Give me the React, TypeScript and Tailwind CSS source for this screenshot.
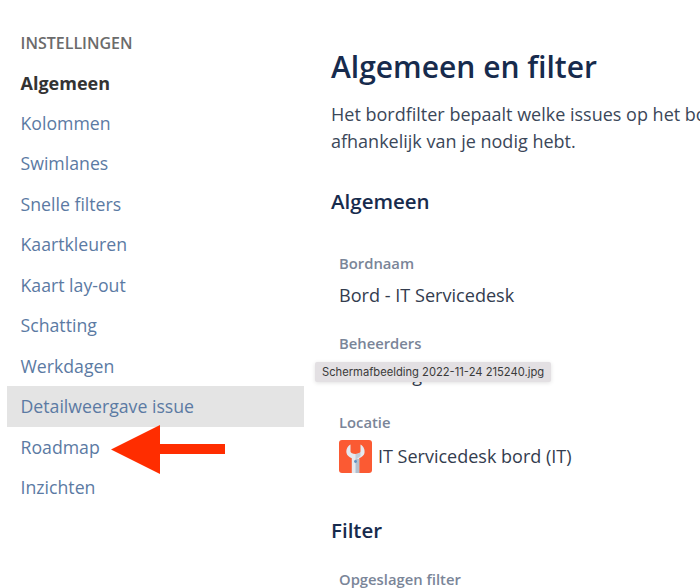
const navItems = [
  "Kolommen",
  "Swimlanes",
  "Snelle filters",
  "Kaartkleuren",
  "Kaart lay-out",
  "Schatting",
  "Werkdagen",
  "Detailweergave issue",
  "Roadmap",
  "Inzichten",
];

const WrenchIcon = () => (
  <svg viewBox="0 0 33 33" className="h-[33px] w-[33px] shrink-0">
    <rect width="33" height="33" rx="3" fill="#fb5a33" />
    <path
      d="M11.5 4.5 C8 6.5 7 10 7.5 13 C8 15.5 10 17 12.8 18.2 V33 H20.2 V18.2 C23 17 25 15.5 25.5 13 C26 10 25 6.5 21.5 4.5 V11.5 C21.5 13 19 14 16.5 14 C14 14 11.5 13 11.5 11.5 Z"
      fill="#e6e9ef"
    />
    <path d="M16.5 14 C19 14 21.5 13 21.5 11.5 V16 L16.5 20 Z" fill="#c3ccd8" />
    <path d="M16.5 19 H20.2 V33 H16.5 Z" fill="#b4c0cf" />
    <circle cx="16.5" cy="21.5" r="1.4" fill="#5d8fc2" />
  </svg>
);

const Field = ({ label, children }: { label: string; children: React.ReactNode }) => (
  <div className="pl-2">
    <div className="text-[14.8px] leading-[22px] font-semibold text-[#7a8598]">{label}</div>
    <div className="mt-[8px] text-[18.1px] leading-[26px] text-[#333c4e]">{children}</div>
  </div>
);

export default function App() {
  return (
    <div className="relative flex h-[588px] w-[700px] overflow-hidden bg-white font-['Open_Sans','Noto_Sans',sans-serif]">
      <aside className="ml-[7px] w-[297px] shrink-0 pt-[23px]">
        <div className="pl-[13.5px] text-[16px] leading-[41px] font-semibold text-[#6b6b6b]">INSTELLINGEN</div>
        <div className="pl-[13.5px] text-[18px] leading-[38.6px] font-bold text-[#333333]">Algemeen</div>
        {navItems.map((item) => (
          <div
            key={item}
            className={`pl-[13.5px] text-[17.7px] leading-[40.5px] text-[#5b7aa3] ${
              item === "Detailweergave issue" ? "bg-[#e4e4e4]" : ""
            }`}
          >
            {item}
          </div>
        ))}
      </aside>

      <main className="ml-[27px] w-[369px] shrink-0 pt-[45px]">
        <h1 className="text-[30px] leading-[44px] font-semibold whitespace-nowrap text-[#172b4d]">Algemeen en filter</h1>
        <p className="mt-[12px] text-[18px] leading-[27px] whitespace-nowrap text-[#3b4759]">
          Het bordfilter bepaalt welke issues op het bord
          <br />
          afhankelijk van je nodig hebt.
        </p>
        <h2 className="mt-[31px] text-[20.5px] leading-[30px] font-semibold text-[#172b4d]">Algemeen</h2>
        <div className="mt-[36px] flex flex-col gap-[24px]">
          <Field label="Bordnaam">Bord - IT Servicedesk</Field>
          <Field label="Beheerders">Team Vogels IT</Field>
          <div className="-mt-[1px] pl-2">
            <div className="text-[14.8px] leading-[22px] font-semibold text-[#7a8598]">Locatie</div>
            <div className="mt-[7px] flex items-center gap-[6px] text-[18px] leading-[33px] text-[#333c4e]">
              <WrenchIcon />
              IT Servicedesk bord (IT)
            </div>
          </div>
        </div>
        <h2 className="mt-[42px] text-[20.5px] leading-[30px] font-semibold text-[#172b4d]">Filter</h2>
        <div className="mt-[23px] pl-2 text-[14.8px] leading-[22px] font-semibold text-[#7a8598]">Opgeslagen filter</div>
      </main>

      <div className="absolute top-[362px] left-[315px] flex h-[20px] w-[236px] items-center rounded-[2px] bg-[#e3e0e3] pl-[7px] font-['Inter',sans-serif] text-[11.2px] whitespace-nowrap text-[#3a3a3a] shadow-[0_1px_4px_rgba(0,0,0,0.12)]">
        Schermafbeelding 2022-11-24 215240.jpg
      </div>

      <svg className="absolute top-[425px] left-[110px]" width="116" height="50" viewBox="0 0 116 50">
        <path d="M1 24.5 L50 0 V19 H115 V29 H50 V49 Z" fill="#ff2d00" />
      </svg>
    </div>
  );
}
